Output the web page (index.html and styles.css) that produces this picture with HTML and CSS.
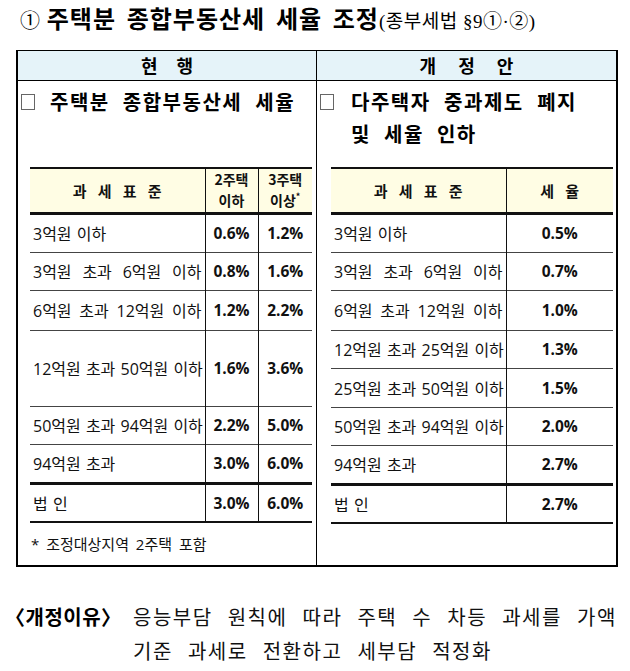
FILE: index.html
```html
<!DOCTYPE html>
<html lang="ko">
<head>
<meta charset="utf-8">
<title>주택분 종합부동산세 세율 조정</title>
<link rel="stylesheet" href="styles.css">
</head>
<body>
<div class="page">
  <h1 class="title"><span class="num">①</span> <span class="tb">주택분 종합부동산세 세율 조정</span><span class="law">(종부세법 §9①·②)</span></h1>

  <div class="compare">
    <div class="ch ch-cur">현 행</div>
    <div class="ch ch-new">개 정 안</div>

    <div class="cell cell-cur">
      <div class="sec-head">
        <span class="chk"></span>
        <span class="sec-text">주택분 종합부동산세 세율</span>
      </div>
      <table class="rt rt-cur">
        <colgroup><col class="c-base"><col class="c-rate"><col class="c-rate"></colgroup>
        <thead>
          <tr><th class="th-base">과 세 표 준</th><th>2주택<br>이하</th><th>3주택<br>이상<sup>*</sup></th></tr>
        </thead>
        <tbody>
          <tr class="r39"><td>3억원 이하</td><td>0.6%</td><td>1.2%</td></tr>
          <tr class="r38"><td class="fill">3억원 초과 6억원 이하</td><td>0.8%</td><td>1.6%</td></tr>
          <tr class="r40"><td class="fill">6억원 초과 12억원 이하</td><td>1.2%</td><td>2.2%</td></tr>
          <tr class="r76"><td class="fill">12억원 초과 50억원 이하</td><td>1.6%</td><td>3.6%</td></tr>
          <tr class="r38"><td class="fill">50억원 초과 94억원 이하</td><td>2.2%</td><td>5.0%</td></tr>
          <tr class="r39 thick"><td>94억원 초과</td><td>3.0%</td><td>6.0%</td></tr>
          <tr class="r39"><td>법 인</td><td>3.0%</td><td>6.0%</td></tr>
        </tbody>
      </table>
      <p class="note">* 조정대상지역 2주택 포함</p>
    </div>

    <div class="cell cell-new">
      <div class="sec-head">
        <span class="chk"></span>
        <span class="sec-text">
          <span class="sec-line sec-first">다주택자 중과제도 폐지</span>
          <span class="sec-line">및 세율 인하</span>
        </span>
      </div>
      <table class="rt rt-new">
        <colgroup><col class="c-base"><col class="c-rate2"></colgroup>
        <thead>
          <tr><th class="th-base">과 세 표 준</th><th class="th-base">세 율</th></tr>
        </thead>
        <tbody>
          <tr class="r39"><td>3억원 이하</td><td>0.5%</td></tr>
          <tr class="r38"><td class="fill">3억원 초과 6억원 이하</td><td>0.7%</td></tr>
          <tr class="r40"><td class="fill">6억원 초과 12억원 이하</td><td>1.0%</td></tr>
          <tr class="r38"><td class="fill">12억원 초과 25억원 이하</td><td>1.3%</td></tr>
          <tr class="r39"><td class="fill">25억원 초과 50억원 이하</td><td>1.5%</td></tr>
          <tr class="r38"><td class="fill">50억원 초과 94억원 이하</td><td>2.0%</td></tr>
          <tr class="r39 thick"><td>94억원 초과</td><td>2.7%</td></tr>
          <tr class="r39"><td>법 인</td><td>2.7%</td></tr>
        </tbody>
      </table>
    </div>
  </div>

  <div class="reason">
    <span class="reason-label">〈개정이유〉</span>
    <div class="reason-text">
      <span class="line">응능부담 원칙에 따라 주택 수 차등 과세를 가액</span>
      <span class="line">기준 과세로 전환하고 세부담 적정화</span>
    </div>
  </div>
</div>
</body>
</html>
```

FILE: styles.css
```css
* { box-sizing: border-box; }

body {
  margin: 0;
  background: #fff;
  color: #000;
  font-family: "Noto Sans CJK KR", sans-serif;
}

.page {
  width: 630px;
  height: 671px;
  overflow: hidden;
}

/* title */
.title {
  margin: 0;
  padding-left: 20px;
  height: 36px;
  line-height: 36px;
  font-size: 24px;
  font-weight: 700;
  white-space: nowrap;
}
.title .num {
  font-weight: 400;
  font-size: 20px;
}
.title .tb {
  letter-spacing: 1px;
  word-spacing: 3px;
}
.title .law {
  font-family: "Liberation Serif", "Noto Sans CJK KR", serif;
  font-weight: 400;
  font-size: 19px;
  letter-spacing: 0.5px;
}

/* comparison box */
.compare {
  margin: 14px 0 0 16px;
  width: 602px;
  border: 1px solid #000;
  border-left-width: 2px;
  border-right-width: 2px;
  border-bottom-width: 2px;
  display: grid;
  grid-template-columns: 299px 299px;
  grid-template-rows: 30px 484px;
}

.ch {
  border-bottom: 1px solid #000;
  background: #e5f3f9;
  text-align: center;
  line-height: 29px;
  font-size: 18px;
  font-weight: 700;
}
.ch-cur {
  border-right: 1px solid #000;
  word-spacing: 14px;
}
.ch-new {
  word-spacing: 17px;
}

.cell-cur {
  border-right: 1px solid #000;
}

.sec-head {
  display: flex;
  align-items: flex-start;
  height: 86px;
  padding: 5px 0 0 3px;
  font-size: 20px;
  font-weight: 700;
  line-height: 32px;
  letter-spacing: 1.5px;
  word-spacing: 6px;
}
.chk {
  flex: none;
  width: 14px;
  height: 16px;
  margin: 8px 15px 0 0;
  border: 1px solid #666;
}
.cell-new .chk {
  margin-right: 17px;
}
.sec-line {
  display: block;
  white-space: nowrap;
}
.sec-first {
  width: 226px;
  text-align: justify;
  text-align-last: justify;
}

/* rate tables */
.rt {
  border-collapse: collapse;
  table-layout: fixed;
  width: 282px;
  margin-left: 12px;
  font-family: "Open Sans", "Noto Sans CJK KR", sans-serif;
  font-size: 16px;
  color: #111;
}
.rt-new {
  margin-left: 14px;
}
.c-base { width: 175px; }
.c-rate { width: 53px; }
.c-rate + .c-rate { width: 54px; }
.c-rate2 { width: 107px; }

.rt th {
  background: #fffde4;
  border-top: 2px solid #111;
  border-bottom: 3px solid #111;
  height: 45px;
  padding: 0;
  font-family: "Noto Sans CJK KR", sans-serif;
  font-weight: 700;
  font-size: 14px;
  line-height: 21px;
  text-align: center;
}
.rt th.th-base {
  font-size: 15px;
  word-spacing: 7px;
}
.rt th sup {
  font-size: 9px;
  line-height: 0;
  vertical-align: 6px;
}
.rt th + th,
.rt td + td {
  border-left: 1px solid #111;
}

.rt td {
  border-top: 1px solid #444;
  padding: 0 0 0 3px;
  vertical-align: middle;
  white-space: nowrap;
  word-spacing: 1px;
}
.rt td.fill {
  padding-right: 3px;
  text-align: justify;
  text-align-last: justify;
}
.rt td + td {
  padding: 0;
  text-align: center;
  font-size: 15.5px;
  font-weight: 700;
}
.rt tr.thick td {
  border-bottom: 3px solid #111;
}
.rt tbody tr:last-child td {
  border-bottom: 2px solid #111;
}

.r38 td { height: 38px; }
.r39 td { height: 39px; }
.r40 td { height: 40px; }
.r76 td { height: 76px; }

.note {
  margin: 11px 0 0 13px;
  font-family: "Open Sans", "Noto Sans CJK KR", sans-serif;
  font-size: 15px;
  line-height: 20px;
  word-spacing: 3px;
  color: #111;
}

/* reason */
.reason {
  display: flex;
  margin-top: 33px;
  line-height: 34px;
}
.reason-label {
  flex: none;
  width: 120px;
  padding-left: 5px;
  font-size: 20px;
  font-weight: 700;
  letter-spacing: 0.5px;
  white-space: nowrap;
}
.reason-text {
  margin-left: 13px;
  font-size: 20px;
  letter-spacing: 1.5px;
  word-spacing: 8px;
  color: #111;
}
.reason-text .line {
  display: block;
  white-space: nowrap;
}
```
